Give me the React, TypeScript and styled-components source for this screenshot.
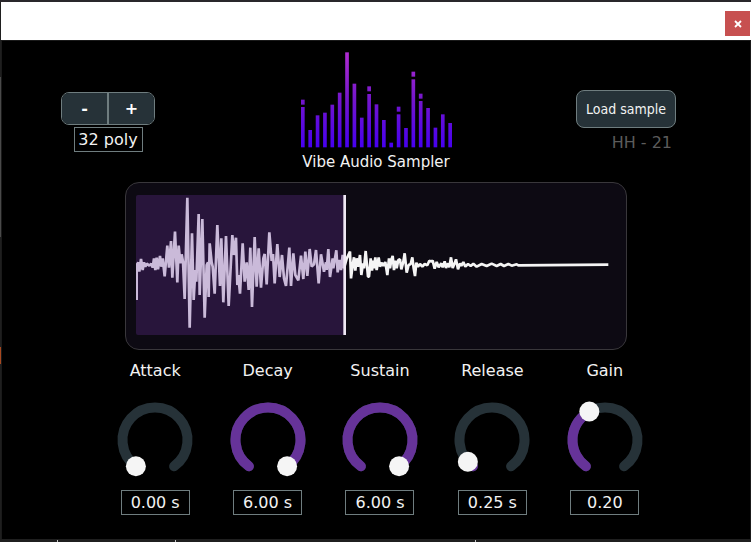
import React, { useState } from 'react';
import styled, { createGlobalStyle } from 'styled-components';

const slate = '#263238';
const outline = '#6f7d7f';
const purple = '#663399';

const GlobalStyle = createGlobalStyle`
  * { box-sizing: border-box; }
  body { margin: 0; background: #1b1b1b; }
  button, input { font: inherit; margin: 0; }
`;

const Desktop = styled.div`
  min-height: 100vh;
  display: flex;
  flex-direction: column;
  padding: 2px 0 3px 1px;
  color: #f2f2f2;
  font: 16px/20px "DejaVu Sans", Verdana, sans-serif;
  background:
    linear-gradient(#29272b, #29272b) top / 100% 2px no-repeat,
    linear-gradient(#a8481f, #a8481f) 0 347px / 1px 17px no-repeat,
    linear-gradient(#4a4a4a, #4a4a4a) 0 77px / 1px 160px no-repeat,
    linear-gradient(#c4c4c4, #c4c4c4) 57px 100% / 1px 2px no-repeat,
    linear-gradient(#c4c4c4, #c4c4c4) 175px 100% / 1px 2px no-repeat,
    linear-gradient(#c4c4c4, #c4c4c4) 475px 100% / 1px 2px no-repeat,
    #1f1f1f;
`;

const TitleBar = styled.header`
  display: flex;
  justify-content: flex-end;
  align-items: flex-start;
  height: 38px;
  padding: 9px 1px 0 0;
  background: #fff;
`;

const CloseButton = styled.button`
  display: grid;
  place-items: center;
  width: 25px;
  height: 25px;
  padding: 0;
  border: 0;
  background: #c75050;
`;

const Plugin = styled.main`
  flex: 1;
  padding: 11px 0 24px;
  border: solid #1a1a1a;
  border-width: 1px 1px 0;
  background: #000;
`;

const TopRow = styled.div`
  display: grid;
  grid-template-columns: 1fr auto 1fr;
  align-items: start;
  padding: 0 59px;
`;

const Voices = styled.section`
  justify-self: start;
  display: flex;
  flex-direction: column;
  align-items: center;
  gap: 2px;
  margin-top: 40px;
`;

const Stepper = styled.div`
  display: flex;
  overflow: hidden;
  border: 1px solid ${outline};
  border-radius: 8px;
`;

const StepButton = styled.button`
  width: 45px;
  height: 31px;
  padding: 0;
  border: 0;
  background: ${slate};
  color: #fff;
  font-size: 16px;
  font-weight: bold;

  & + & {
    width: 47px;
    border-left: 2px solid ${outline};
  }
`;

const ValueBox = styled.input`
  width: 69px;
  height: 25px;
  padding: 0;
  border: 1px solid ${outline};
  background: #000;
  color: #f2f2f2;
  text-align: center;
`;

const Brand = styled.section`
  display: flex;
  flex-direction: column;
  align-items: center;
  gap: 4px;
`;

const ProductName = styled.h1`
  margin: 0;
  font-size: 15px;
  font-weight: normal;
  white-space: nowrap;
`;

const Loader = styled.section`
  justify-self: end;
  display: flex;
  flex-direction: column;
  align-items: flex-end;
  gap: 5px;
  margin: 38px 15px 0 0;
`;

const LoadButton = styled.button`
  width: 100px;
  height: 38px;
  padding: 0;
  border: 1px solid ${outline};
  border-radius: 8px;
  background: ${slate};
  color: #f2f2f2;
  font: 14px "DejaVu Sans Condensed", "DejaVu Sans", sans-serif;
  white-space: nowrap;
`;

const SampleName = styled.span`
  padding-right: 4px;
  color: #5c5c5c;
`;

const Display = styled.section`
  margin: 10px 123px 0;
  padding: 12px 10px 14px;
  border: 1px solid #39373b;
  border-radius: 14px;
  background: #0d0a13;
`;

const Wave = styled.svg`
  display: block;
  width: 100%;
  height: auto;
`;

const Knobs = styled.section`
  display: grid;
  grid-template-columns: repeat(5, 1fr);
  margin-top: 11px;
  padding: 0 89px 0 97px;
`;

const KnobCell = styled.div`
  display: flex;
  flex-direction: column;
  align-items: center;
`;

const Dial = styled.div`
  position: relative;
  width: 80px;
  height: 80px;
  margin: 19px 0 10px;

  input {
    position: absolute;
    inset: 0;
    width: 100%;
    height: 100%;
    opacity: 0;
    cursor: pointer;
  }
`;

const bars: { top: number; cap?: number }[] = [
  { top: 200, cap: 178 }, { top: 269 }, { top: 225 }, { top: 217 }, { top: 193 },
  { top: 157 }, { top: 36 }, { top: 130 }, { top: 232 }, { top: 161, cap: 138 },
  { top: 192 }, { top: 239 }, { top: 307 }, { top: 222, cap: 199 }, { top: 263 },
  { top: 117, cap: 94 }, { top: 182, cap: 160 }, { top: 203 }, { top: 262 },
  { top: 222 }, { top: 248 },
];

function Logo() {
  return (
    <svg width="153" height="96" viewBox="26 35 459 288" aria-hidden="true">
      <defs>
        <linearGradient id="spectrum" gradientUnits="userSpaceOnUse" x1="0" x2="0" y1="321" y2="36">
          <stop offset="0" stopColor="#4600f0" />
          <stop offset="0.5" stopColor="#7416cc" />
          <stop offset="1" stopColor="#b02cd0" />
        </linearGradient>
      </defs>
      <g fill="url(#spectrum)">
        {bars.map(({ top, cap }, i) => (
          <React.Fragment key={i}>
            <rect x={29 + i * 22.1} y={top} width="11" height={321 - top} />
            {cap !== undefined && <rect x={29 + i * 22.1} y={cap} width="11" height="15" />}
          </React.Fragment>
        ))}
      </g>
    </svg>
  );
}

const wavePoints =
  '2,315 2,210 7,202 10,230 15,192 20,225 24,202 28,215 32,206 40,212 46,206 50,218 54,190 58,225 62,188 66,223 72,183 76,215 80,190 86,244 ' +
  '94,152 99,218 105,138 109,248 117,110 124,262 128,152 133,205 137,178 141,200 146,312 154,8 161,398 168,115 173,315 178,225 181,260 ' +
  '188,57 191,300 199,72 206,368 212,210 216,202 218,306 221,145 227,202 230,215 236,296 244,90 252,273 256,130 262,322 270,123 278,333 ' +
  '289,120 294,180 300,128 304,270 307,240 312,296 320,145 326,260 332,202 338,285 343,158 348,336 356,126 362,275 368,160 375,278 ' +
  '382,190 386,177 392,268 400,112 407,198 411,177 416,265 424,147 431,246 438,180 444,250 450,273 460,158 465,273 472,175 478,240 ' +
  '487,256 495,182 502,252 508,170 514,243 521,162 527,215 534,208 540,165 548,265 555,178 564,230 570,202 572,225 577,162 582,246 ' +
  '590,190 592,220 601,166 605,232 610,195 615,225 620,180 624,220 632,191 642,170 645,250 650,210 654,187 658,227 662,190 666,215 ' +
  '672,180 676,240 681,205 684,220 689,168 696,245 699,245 704,190 708,227 711,197 714,220 718,187 722,225 728,187 732,215 738,203 ' +
  '742,213 748,201 754,240 759,190 762,220 766,195 770,183 774,225 778,197 782,220 787,195 792,193 796,223 802,200 806,175 812,233 ' +
  '818,210 824,207 829,187 833,220 837,243 841,203 846,215 852,207 859,215 866,207 874,211 880,197 886,200 890,197 896,221 902,201 ' +
  '908,217 916,205 920,217 926,199 930,219 936,205 940,217 945,187 950,219 956,205 960,193 966,223 972,205 976,213 982,201 988,215 ' +
  '996,207 1004,213 1012,206 1022,215 1037,207 1052,213 1067,206 1082,213 1094,207 1104,213 1117,207 1127,212 1142,208 1147,211 1417,209';

function Waveform() {
  return (
    <Wave viewBox="0 0 1440 420" role="img" aria-label="Sample waveform">
      <polyline points={wavePoints} fill="none" stroke="#f5f5f5" strokeWidth="8" strokeLinejoin="bevel" />
      <rect width="625" height="420" rx="6" fill={purple} fillOpacity="0.3" />
      <rect x="622" width="8" height="420" fill="#f0e9f5" />
    </Wave>
  );
}

const startAngle = 216;
const sweep = 288;

function polar(angle: number) {
  const a = (angle * Math.PI) / 180;
  return { x: 40 + 32.5 * Math.sin(a), y: 40 - 32.5 * Math.cos(a) };
}

function arc(fraction: number) {
  const from = polar(startAngle);
  const to = polar(startAngle + sweep * fraction);
  return `M${from.x} ${from.y}A32.5 32.5 0 ${sweep * fraction > 180 ? 1 : 0} 1 ${to.x} ${to.y}`;
}

type KnobProps = { label: string; initial: number; max: number; unit?: string; curve?: number };

function Knob({ label, initial, max, unit = '', curve = 1 }: KnobProps) {
  const [position, setPosition] = useState(Math.pow(initial / max, 1 / curve));
  const text = (Math.pow(position, curve) * max).toFixed(2) + unit;
  const thumb = polar(startAngle + sweep * position);
  const id = label.toLowerCase();
  return (
    <KnobCell>
      <label htmlFor={id}>{label}</label>
      <Dial>
        <svg width="80" height="80" viewBox="0 0 80 80" aria-hidden="true">
          <g fill="none" strokeWidth="10" strokeLinecap="round">
            <path d={arc(1)} stroke={slate} />
            {position > 0 && <path d={arc(position)} stroke={purple} />}
          </g>
          <circle cx={thumb.x} cy={thumb.y} r="10" fill="#f5f5f5" />
        </svg>
        <input
          id={id}
          type="range"
          min="0"
          max="1"
          step="any"
          value={position}
          onChange={(e) => setPosition(Number(e.target.value))}
        />
      </Dial>
      <ValueBox readOnly value={text} aria-label={`${label} value`} />
    </KnobCell>
  );
}

export default function App() {
  const [voices, setVoices] = useState(32);
  return (
    <Desktop>
      <GlobalStyle />
      <TitleBar>
        <CloseButton aria-label="Close">
          <svg width="8" height="8" viewBox="0 0 8 8" aria-hidden="true">
            <path d="M1 1l6 6M7 1L1 7" stroke="#fff" strokeWidth="1.8" />
          </svg>
        </CloseButton>
      </TitleBar>
      <Plugin>
        <TopRow>
          <Voices>
            <Stepper>
              <StepButton onClick={() => setVoices(Math.max(1, voices - 1))}>-</StepButton>
              <StepButton onClick={() => setVoices(voices + 1)}>+</StepButton>
            </Stepper>
            <ValueBox readOnly value={`${voices} poly`} aria-label="Polyphony" />
          </Voices>
          <Brand>
            <Logo />
            <ProductName>Vibe Audio Sampler</ProductName>
          </Brand>
          <Loader>
            <LoadButton>Load sample</LoadButton>
            <SampleName>HH - 21</SampleName>
          </Loader>
        </TopRow>
        <Display>
          <Waveform />
        </Display>
        <Knobs>
          <Knob label="Attack" initial={0} max={6} unit=" s" />
          <Knob label="Decay" initial={6} max={6} unit=" s" />
          <Knob label="Sustain" initial={6} max={6} unit=" s" />
          <Knob label="Release" initial={0.25} max={6} unit=" s" />
          <Knob label="Gain" initial={0.2} max={1} curve={1.756} />
        </Knobs>
      </Plugin>
    </Desktop>
  );
}
